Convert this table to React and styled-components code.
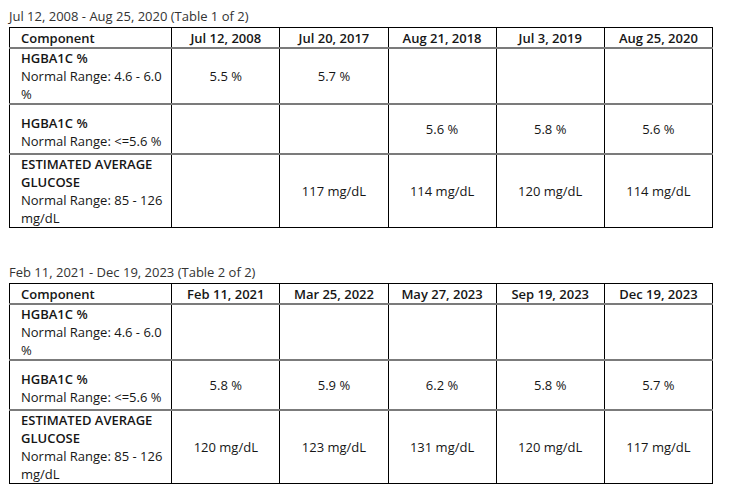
import React from 'react'
import styled, { createGlobalStyle } from 'styled-components'

const GlobalStyle = createGlobalStyle`
  body {
    margin: 0;
    background: #ffffff;
    font-family: 'Open Sans', 'Noto Sans', Arial, sans-serif;
    font-size: 13px;
    color: #161616;
  }
`

const Page = styled.div`
  padding: 7px 0 0 9px;
`

const Section = styled.section`
  margin-bottom: 35px;

  &:last-child {
    margin-bottom: 0;
  }
`

const Caption = styled.div`
  line-height: 18px;
  color: #333;
  margin-bottom: 2px;
`

const Table = styled.table`
  border-collapse: collapse;
  border: 1px solid #000;
  table-layout: fixed;
  width: 704px;
  line-height: 18px;
`

const HeadCell = styled.th`
  box-sizing: border-box;
  font-weight: 600;
  text-align: ${p => (p.$left ? 'left' : 'center')};
  padding: 1px 4px 0 ${p => (p.$left ? '11px' : '4px')};
  border-left: 1px solid #000;
  border-right: 1px solid #000;
  width: ${p => (p.$left ? '162px' : '108px')};
`

const LabelCell = styled.td`
  box-sizing: border-box;
  text-align: left;
  vertical-align: top;
  padding: ${p => p.$padTop || 0}px 4px ${p => p.$padBottom || 0}px 11px;
  border: 1px solid #000;
  border-top: 2px solid #7b7b7b;
  border-bottom: 2px solid #7b7b7b;
  tr:last-child > & {
    border-bottom: 1px solid #000;
  }
`

const ValueCell = styled.td`
  box-sizing: border-box;
  text-align: center;
  vertical-align: middle;
  padding: 0 4px;
  border: 1px solid #000;
  border-top: 2px solid #7b7b7b;
  border-bottom: 2px solid #7b7b7b;
  tr:last-child > & {
    border-bottom: 1px solid #000;
  }
`

const Name = styled.div`
  font-weight: 600;
`

const tables = [
  {
    caption: 'Jul 12, 2008 - Aug 25, 2020 (Table 1 of 2)',
    dates: ['Jul 12, 2008', 'Jul 20, 2017', 'Aug 21, 2018', 'Jul 3, 2019', 'Aug 25, 2020'],
    rows: [
      ['5.5 %', '5.7 %', '', '', ''],
      ['', '', '5.6 %', '5.8 %', '5.6 %'],
      ['', '117 mg/dL', '114 mg/dL', '120 mg/dL', '114 mg/dL'],
    ],
  },
  {
    caption: 'Feb 11, 2021 - Dec 19, 2023 (Table 2 of 2)',
    dates: ['Feb 11, 2021', 'Mar 25, 2022', 'May 27, 2023', 'Sep 19, 2023', 'Dec 19, 2023'],
    rows: [
      ['', '', '', '', ''],
      ['5.8 %', '5.9 %', '6.2 %', '5.8 %', '5.7 %'],
      ['120 mg/dL', '123 mg/dL', '131 mg/dL', '120 mg/dL', '117 mg/dL'],
    ],
  },
]

const components = [
  { name: 'HGBA1C %', range: 'Normal Range: 4.6 - 6.0 %' },
  { name: 'HGBA1C %', range: 'Normal Range: <=5.6 %', padTop: 9, padBottom: 3 },
  { name: 'ESTIMATED AVERAGE GLUCOSE', range: 'Normal Range: 85 - 126 mg/dL' },
]

const ResultTable = ({ caption, dates, rows }) => (
  <Section>
    <Caption>{caption}</Caption>
    <Table>
      <thead>
        <tr>
          <HeadCell $left>Component</HeadCell>
          {dates.map(d => (
            <HeadCell key={d}>{d}</HeadCell>
          ))}
        </tr>
      </thead>
      <tbody>
        {components.map((c, i) => (
          <tr key={i}>
            <LabelCell $padTop={c.padTop} $padBottom={c.padBottom}>
              <Name>{c.name}</Name>
              <div>{c.range}</div>
            </LabelCell>
            {rows[i].map((v, j) => (
              <ValueCell key={j}>{v}</ValueCell>
            ))}
          </tr>
        ))}
      </tbody>
    </Table>
  </Section>
)

export default function App() {
  return (
    <>
      <GlobalStyle />
      <Page>
        {tables.map(t => (
          <ResultTable key={t.caption} {...t} />
        ))}
      </Page>
    </>
  )
}
